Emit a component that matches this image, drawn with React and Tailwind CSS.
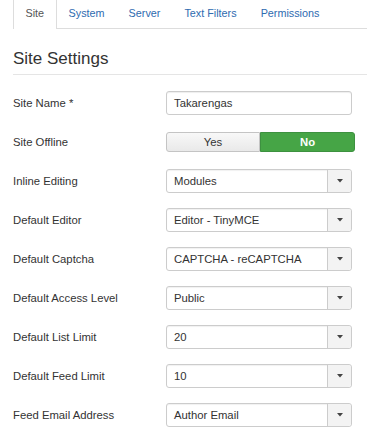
import React from "react";

const tabs = ["Site", "System", "Server", "Text Filters", "Permissions"];

const selects = [
  { label: "Inline Editing", value: "Modules" },
  { label: "Default Editor", value: "Editor - TinyMCE" },
  { label: "Default Captcha", value: "CAPTCHA - reCAPTCHA" },
  { label: "Default Access Level", value: "Public" },
  { label: "Default List Limit", value: "20" },
  { label: "Default Feed Limit", value: "10" },
  { label: "Feed Email Address", value: "Author Email" },
];

// Fake chosen-style select box
const SelectBox = ({ value }) => (
  <div className="flex h-[24px] w-[186px] rounded-[3px] border border-[#cccccc] bg-white shadow-[inset_0_1px_1px_rgba(0,0,0,0.06)]">
    <div className="flex flex-1 items-center pl-[7px] text-[#333333]">{value}</div>
    <div className="flex w-[24px] items-center justify-center border-l border-[#cccccc] bg-[#f3f3f3] rounded-r-[3px]">
      <svg width="6" height="4" viewBox="0 0 6 4">
        <path d="M0 0 L6 0 L3 3.5 Z" fill="#444444" />
      </svg>
    </div>
  </div>
);

const Row = ({ label, children }) => (
  <div className="flex h-[24px] items-center">
    <div className="w-[153px] text-[#333333]">{label}</div>
    {children}
  </div>
);

export default function App() {
  return (
    <div className="h-[439px] w-[367px] overflow-hidden bg-white pl-[13px] text-[11.3px] font-['Liberation_Sans',Arial,sans-serif]">
      {/* Tabs */}
      <div className="flex h-[29px] border-b border-[#dddddd] text-[10.8px]">
        {tabs.map((t, i) =>
          i === 0 ? (
            <div
              key={t}
              className="-mb-px flex h-[29px] items-center border-x border-[#dddddd] bg-white px-[11.5px] pb-[2px] text-[#555555]"
            >
              {t}
            </div>
          ) : (
            <div key={t} className="flex items-center px-[12px] pb-[2px] text-[#2e6bb0]">
              {t}
            </div>
          )
        )}
      </div>

      {/* Heading */}
      <div className="mt-[20px] border-b border-[#e5e5e5] pb-[5px] text-[17px] leading-[20px] text-[#333333]">
        Site Settings
      </div>

      {/* Form */}
      <div className="mt-[16px] flex flex-col gap-[15px]">
        <Row label="Site Name *">
          <div className="flex h-[24px] w-[186px] items-center rounded-[3px] border border-[#cccccc] bg-white pl-[7px] text-[#333333] shadow-[inset_0_1px_1px_rgba(0,0,0,0.07)]">
            Takarengas
          </div>
        </Row>
        <Row label="Site Offline">
          <div className="flex h-[20px] w-[189px]">
            <div className="flex w-[94px] items-center justify-center rounded-l-[3px] border border-[#c4c4c4] bg-gradient-to-b from-[#f8f8f8] to-[#e9e9e9] text-[#333333]">
              Yes
            </div>
            <div className="flex flex-1 items-center justify-center rounded-r-[3px] border border-[#3d9140] bg-[#46a546] font-bold text-white">
              No
            </div>
          </div>
        </Row>
        {selects.map((s) => (
          <Row key={s.label} label={s.label}>
            <SelectBox value={s.value} />
          </Row>
        ))}
      </div>
    </div>
  );
}
